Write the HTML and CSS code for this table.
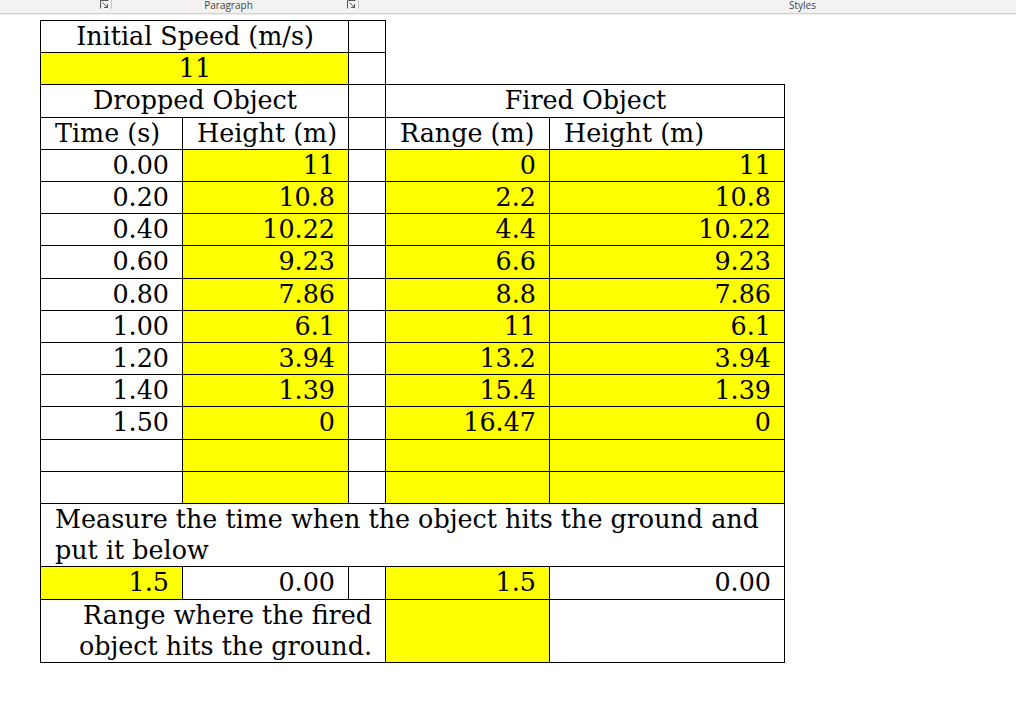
FILE: index.html
```html
<!DOCTYPE html>
<html>
<head>
<meta charset="utf-8">
<link rel="stylesheet" href="styles.css">
</head>
<body>
<div class="ribbon">
  <div class="group g1">
    <span class="launcher"><svg width="9" height="9" viewBox="0 0 9 9"><path d="M0.5 8.5V0.5H8.5" fill="none" stroke="#555" stroke-width="1"/><path d="M2.5 2.5L7.5 7.5M4 7.5H7.5V4" fill="none" stroke="#555" stroke-width="1"/></svg></span>
    <span class="sep"></span>
  </div>
  <div class="group g2">
    <span class="label">Paragraph</span>
    <span class="launcher"><svg width="9" height="9" viewBox="0 0 9 9"><path d="M0.5 8.5V0.5H8.5" fill="none" stroke="#555" stroke-width="1"/><path d="M2.5 2.5L7.5 7.5M4 7.5H7.5V4" fill="none" stroke="#555" stroke-width="1"/></svg></span>
    <span class="sep"></span>
  </div>
  <div class="group g3">
    <span class="label">Styles</span>
  </div>
</div>
<div class="page">
<table class="sheet">
  <colgroup>
    <col class="c1"><col class="c2"><col class="c3"><col class="c4"><col class="c5">
  </colgroup>
  <tr><td colspan="2" class="c">Initial Speed (m/s)</td><td></td></tr>
  <tr><td colspan="2" class="c y">11</td><td></td></tr>
  <tr><td colspan="2" class="c">Dropped Object</td><td></td><td colspan="2" class="c">Fired Object</td></tr>
  <tr><td class="l">Time (s)</td><td class="l">Height (m)</td><td></td><td class="l">Range (m)</td><td class="l">Height (m)</td></tr>
  <tr><td class="r">0.00</td><td class="r y">11</td><td></td><td class="r y">0</td><td class="r y">11</td></tr>
  <tr><td class="r">0.20</td><td class="r y">10.8</td><td></td><td class="r y">2.2</td><td class="r y">10.8</td></tr>
  <tr><td class="r">0.40</td><td class="r y">10.22</td><td></td><td class="r y">4.4</td><td class="r y">10.22</td></tr>
  <tr><td class="r">0.60</td><td class="r y">9.23</td><td></td><td class="r y">6.6</td><td class="r y">9.23</td></tr>
  <tr><td class="r">0.80</td><td class="r y">7.86</td><td></td><td class="r y">8.8</td><td class="r y">7.86</td></tr>
  <tr><td class="r">1.00</td><td class="r y">6.1</td><td></td><td class="r y">11</td><td class="r y">6.1</td></tr>
  <tr><td class="r">1.20</td><td class="r y">3.94</td><td></td><td class="r y">13.2</td><td class="r y">3.94</td></tr>
  <tr><td class="r">1.40</td><td class="r y">1.39</td><td></td><td class="r y">15.4</td><td class="r y">1.39</td></tr>
  <tr><td class="r">1.50</td><td class="r y">0</td><td></td><td class="r y">16.47</td><td class="r y">0</td></tr>
  <tr><td></td><td class="y"></td><td></td><td class="y"></td><td class="y"></td></tr>
  <tr><td></td><td class="y"></td><td></td><td class="y"></td><td class="y"></td></tr>
  <tr><td colspan="5" class="l">Measure the time when the object hits the ground and<br>put it below</td></tr>
  <tr><td class="r y">1.5</td><td class="r">0.00</td><td></td><td class="r y">1.5</td><td class="r">0.00</td></tr>
  <tr><td colspan="3" class="r">Range where the fired<br>object hits the ground.</td><td class="y"></td><td></td></tr>
</table>
</div>
</body>
</html>
```

FILE: styles.css
```css
html, body {
  margin: 0;
  padding: 0;
  background: #ffffff;
}

.ribbon {
  display: flex;
  height: 13px;
  background: #f3f2f1;
  border-bottom: 1px solid #d2d0ce;
  box-shadow: 0 1px 1px rgba(0, 0, 0, 0.05);
  font-family: "Open Sans", "Noto Sans", sans-serif;
  font-size: 10px;
  color: #444;
}

.group {
  position: relative;
  display: flex;
  justify-content: center;
  height: 13px;
}

.g1 {
  width: 112px;
}

.g2 {
  width: 247px;
}

.g3 {
  flex: 1;
  padding-left: 230px;
}

.sep {
  position: absolute;
  right: 0;
  top: 0;
  width: 1px;
  height: 9px;
  background: #c8c6c4;
}

.label {
  line-height: 11px;
  height: 13px;
}

.g2 .label {
  margin-left: -14px;
}

.launcher {
  position: absolute;
  right: 3px;
  top: 0;
  width: 9px;
  height: 9px;
  display: block;
}

.launcher svg {
  display: block;
}

.page {
  padding: 6px 0 0 40px;
}

.sheet {
  border-collapse: collapse;
  table-layout: fixed;
  width: 744px;
  font-family: "DejaVu Serif", serif;
  font-size: 25.4px;
  color: #000;
}

.c1 { width: 142px; }
.c2 { width: 166px; }
.c3 { width: 37px; }
.c4 { width: 164px; }
.c5 { width: 235px; }

.sheet td {
  border: 1px solid #000;
  padding: 0 13px 0 14px;
  line-height: 31.2px;
  height: 31.2px;
  white-space: nowrap;
  vertical-align: top;
}

.sheet td.l { text-align: left; }
.sheet td.c { text-align: center; }
.sheet td.r { text-align: right; }
.sheet td.y { background: #ffff00; }
```
